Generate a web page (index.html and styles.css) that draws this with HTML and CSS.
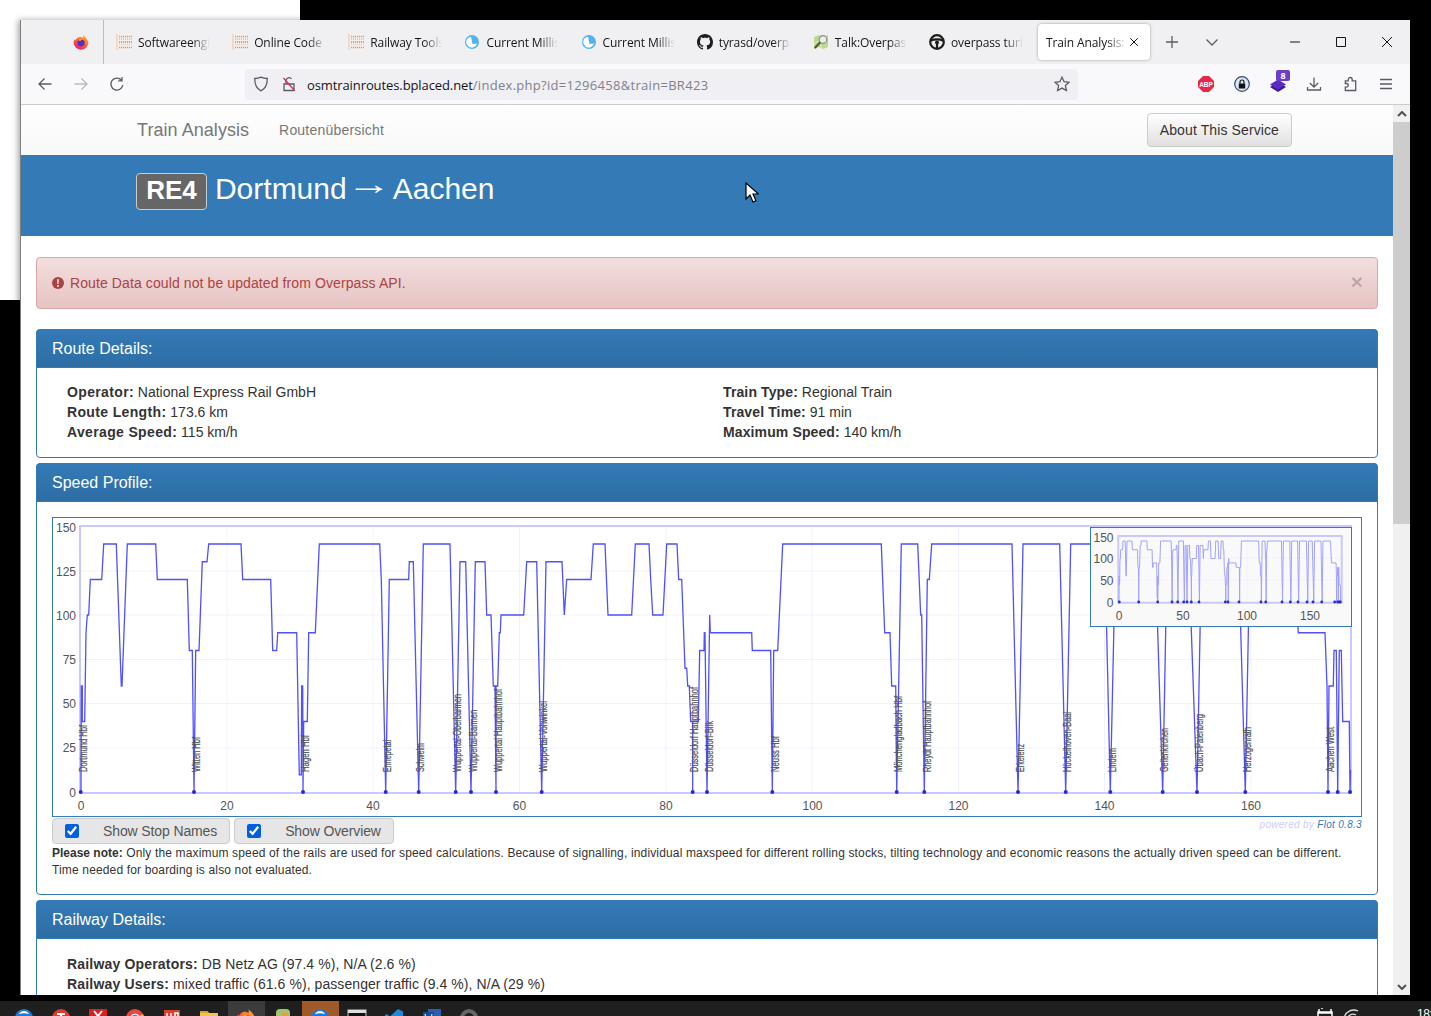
FILE: index.html
```html
<!DOCTYPE html>
<html lang="en">
<head>
<meta charset="utf-8">
<title>Train Analysis</title>
<link rel="stylesheet" href="styles.css">
</head>
<body>
<svg class="defs" aria-hidden="true">
  <defs>
    <linearGradient id="fxg" x1="0.8" y1="0" x2="0.2" y2="1"><stop offset="0" stop-color="#ffbd2e"/><stop offset=".45" stop-color="#ff6b2c"/><stop offset="1" stop-color="#e31587"/></linearGradient>
    <symbol id="i-fx" viewBox="0 0 16 16">
      <path d="M10 .6c.4 1.6 2 2 3.2 3.6 1.300 1.700 2.100 3.300 2.100 4.600a7.300 7.100 0 1 1-14.600-.3c0-1.400.5-2.700 1.200-3.500l.6 1.400C3.300 4 5.600 2.900 7 3c1.200 0 2.300.5 3 .9C10.300 3 10.300 1.700 10 .6z" fill="url(#fxg)"/>
      <circle cx="8" cy="8.800" r="3.600" fill="#5b2ac0"/>
      <path d="M5 6.500c1-1.700 4-2 5.500-.3-1.500-.5-2.500 0-2.800.8-.8 0-1.800-.2-2.700-.5z" fill="#ff9a2e"/>
    </symbol>
    <symbol id="i-angle" viewBox="0 0 16 16">
      <rect width="16" height="16" fill="#f8f0ec"/>
      <rect x="0" width="2" height="16" fill="#f3d7c9"/>
      <g fill="none" stroke-width="1.400" stroke-dasharray="1.200 .8">
        <path d="M3 2.500h13" stroke="#a9a4a0"/>
        <path d="M3 5h13" stroke="#c9c4c0"/>
        <path d="M3 8h13" stroke="#b28f7c"/>
        <path d="M3 10.500h13" stroke="#e3cfc4"/>
        <path d="M3 13.500h13" stroke="#c99a80"/>
      </g>
    </symbol>
    <symbol id="i-millis" viewBox="0 0 16 16">
      <circle cx="8" cy="8" r="7" fill="#55b3ea"/>
      <path d="M7 2.800A5.300 5.300 0 0 0 4.500 12.400 5.300 5.300 0 0 0 13 9.500L8.500 10z" fill="#fff"/>
    </symbol>
    <symbol id="i-gh" viewBox="0 0 16 16">
      <path fill="#1b1f23" d="M8 0C3.580 0 0 3.580 0 8c0 3.540 2.290 6.530 5.470 7.590.4.070.55-.17.55-.38 0-.19-.01-.82-.01-1.490-2.010.37-2.530-.49-2.690-.94-.09-.23-.48-.94-.82-1.130-.28-.15-.68-.52-.01-.53.630-.01 1.080.58 1.230.82.720 1.210 1.870.87 2.330.66.070-.52.280-.87.510-1.070-1.780-.2-3.640-.89-3.640-3.950 0-.87.310-1.590.820-2.150-.08-.2-.36-1.020.080-2.120 0 0 .67-.21 2.200.82.640-.18 1.320-.27 2-.27.680 0 1.360.09 2 .27 1.530-1.040 2.200-.82 2.200-.82.440 1.100.160 1.920.080 2.120.510.560.820 1.270.820 2.150 0 3.070-1.870 3.750-3.650 3.950.290.250.540.730.540 1.480 0 1.070-.01 1.930-.01 2.200 0 .21.150.46.550.38A8.013 8.013 0 0 0 16 8c0-4.420-3.580-8-8-8z"/>
    </symbol>
    <symbol id="i-talk" viewBox="0 0 16 16">
      <path d="M1 3l5-2 4 2 5-2v12l-5 2-4-2-5 2z" fill="#b9dc8f"/>
      <path d="M1 10l5-3 3 8" fill="none" stroke="#e8e3b8" stroke-width="1"/>
      <circle cx="10" cy="5.500" r="3.800" fill="#e6eef0" stroke="#8b8f78" stroke-width="1.200"/>
      <path d="M7.200 8.300L1.800 14" stroke="#4c5a3a" stroke-width="2.200"/>
    </symbol>
    <symbol id="i-turbo" viewBox="0 0 16 16">
      <circle cx="8" cy="8" r="6.800" fill="none" stroke="#1c1c1c" stroke-width="2.200"/>
      <path d="M1.500 6.800C5 5 11 5 14.500 6.800M8 10v5" fill="none" stroke="#1c1c1c" stroke-width="2.200"/>
      <circle cx="8" cy="8.500" r="2" fill="#1c1c1c"/>
    </symbol>
  </defs>
</svg>

<div class="backdrop"></div>

<main class="window">
  <header class="tabbar">
    <div class="fx-cell"><svg class="fav"><use href="#i-fx"/></svg></div>
    <div class="tab"><svg class="fav"><use href="#i-angle"/></svg><span class="tab-title">Softwareengineering</span></div>
    <div class="tab"><svg class="fav"><use href="#i-angle"/></svg><span class="tab-title">Online Code Editor</span></div>
    <div class="tab"><svg class="fav"><use href="#i-angle"/></svg><span class="tab-title">Railway Tools</span></div>
    <div class="tab"><svg class="fav"><use href="#i-millis"/></svg><span class="tab-title">Current Millis</span></div>
    <div class="tab"><svg class="fav"><use href="#i-millis"/></svg><span class="tab-title">Current Millis</span></div>
    <div class="tab"><svg class="fav"><use href="#i-gh"/></svg><span class="tab-title">tyrasd/overpass</span></div>
    <div class="tab"><svg class="fav"><use href="#i-talk"/></svg><span class="tab-title">Talk:Overpass turbo</span></div>
    <div class="tab"><svg class="fav"><use href="#i-turbo"/></svg><span class="tab-title">overpass turbo</span></div>
    <div class="tab tab-active"><span class="tab-title tab-title-active">Train Analysis: RE4</span>
      <svg class="tab-close" viewBox="0 0 12 12"><path d="M1.500 1.500l9 9m0-9l-9 9"/></svg></div>
    <div class="tabbtn"><svg class="ic16" viewBox="0 0 16 16"><path d="M8 2v12M2 8h12"/></svg></div>
    <div class="tabbtn"><svg class="ic16" viewBox="0 0 16 16"><path d="M2.500 5.500L8 11l5.500-5.500"/></svg></div>
    <div class="winbtns">
      <div class="winbtn"><svg class="win-ic" viewBox="0 0 12 12"><path d="M1 6h10"/></svg></div>
      <div class="winbtn"><svg class="win-ic" viewBox="0 0 12 12"><path d="M1.500 1.500h9v9h-9z"/></svg></div>
      <div class="winbtn"><svg class="win-ic" viewBox="0 0 12 12"><path d="M1 1l10 10m0-10L1 11"/></svg></div>
    </div>
  </header>

  <nav class="toolbar">
    <div class="tbtn"><svg class="ic16" viewBox="0 0 16 16"><path d="M14.500 8H2M7.500 2.500L2 8l5.500 5.500"/></svg></div>
    <div class="tbtn"><svg class="ic16 ic-dim" viewBox="0 0 16 16"><path d="M1.500 8H14M8.500 2.500L14 8l-5.500 5.500"/></svg></div>
    <div class="tbtn"><svg class="ic16" viewBox="0 0 16 16"><path d="M13.800 9a6 6 0 1 1-1.500-5M13 1v3.800H9.200"/></svg></div>
    <div class="urlbar">
      <svg class="ic16" viewBox="0 0 16 16"><path d="M8 1.200c2 1 4 1.300 6.300 1.300 0 5.500-1.500 10-6.300 12.300C3.200 12.500 1.700 8 1.700 2.500 4 2.500 6 2.200 8 1.200z"/></svg>
      <svg class="ic16" viewBox="0 0 16 16"><path d="M3 8h10v6.500H3zM5 8V4.500a3 3 0 0 1 5.500-1.500"/><path class="strike" d="M2.500 2l11 12.500"/></svg>
      <span class="url"><span class="url-host">osmtrainroutes.bplaced.net</span><span class="url-path">/index.php?id=1296458&amp;train=BR423</span></span>
      <svg class="ic16 star" viewBox="0 0 16 16"><path d="M8 1.200l2.100 4.500 4.900.6-3.600 3.300 1 4.900L8 12.100l-4.400 2.400 1-4.900L1 6.300l4.900-.6z"/></svg>
    </div>
    <div class="tb-spacer"></div>
    <div class="tbtn"><svg class="fav" viewBox="0 0 16 16"><path d="M5 0h6l5 5v6l-5 5H5l-5-5V5z" fill="#e8274a"/><text class="abp" x="8" y="10.500" text-anchor="middle">ABP</text></svg></div>
    <div class="tbtn"><svg class="fav" viewBox="0 0 16 16"><circle cx="8" cy="8" r="7.300" fill="#dbe6f5" stroke="#3b4a6b" stroke-width="1.200"/><path d="M4.800 7.500h6.400v5H4.800z" fill="#111"/><path d="M6 7.500V6a2 2 0 0 1 4 0v1.500" fill="none" stroke="#111" stroke-width="1.200"/></svg></div>
    <div class="tbtn tbtn-badge"><svg class="fav" viewBox="0 0 16 16"><path d="M0 11l8-5 8 5-8 5z" fill="#3f1a96"/><path d="M0 8.500l8-5 8 5-8 5z" fill="#5a2bc0"/></svg><span class="badge">8</span></div>
    <div class="tbtn"><svg class="ic16" viewBox="0 0 16 16"><path d="M8 1.500v9.500M3.800 7L8 11l4.200-4M1.500 11v3h13v-3"/></svg></div>
    <div class="tbtn"><svg class="ic16" viewBox="0 0 16 16"><path d="M6.200 4.800V3.500a2 2 0 1 1 4 0v1.300h3.500v9.700H3.300v-3.400H4.500a1.800 1.800 0 1 0 0-3.600H3.300V4.800z"/></svg></div>
    <div class="tbtn"><svg class="ic16" viewBox="0 0 16 16"><path d="M2 3.500h12M2 8h12M2 12.500h12"/></svg></div>
  </nav>

  <div class="viewport">
    <div class="page">
      <div class="navbar">
        <span class="brand">Train Analysis</span>
        <span class="navlink">Routenübersicht</span>
        <span class="about-btn">About This Service</span>
      </div>
      <div class="jumbo">
        <span class="route-label">RE4</span>
        <h1 class="route-title">Dortmund <span class="arrow">→</span> Aachen</h1>
      </div>
      <div class="content">
        <div class="alert">
          <svg class="alert-ic" viewBox="0 0 12 12"><circle cx="6" cy="6" r="6"/><path class="alert-mark" d="M5 2.200h2l-.3 4.800H5.300zM5 8h2v1.800H5z"/></svg>
          <span class="alert-text">Route Data could not be updated from Overpass API.</span>
          <span class="alert-close">×</span>
        </div>

        <section class="panel">
          <h2 class="panel-head">Route Details:</h2>
          <div class="panel-body details">
            <div class="col-left"><b>Operator:</b> National Express Rail GmbH<br><b>Route Length:</b> 173.6 km<br><b>Average Speed:</b> 115 km/h</div>
            <div class="col-right"><b>Train Type:</b> Regional Train<br><b>Travel Time:</b> 91 min<br><b>Maximum Speed:</b> 140 km/h</div>
          </div>
        </section>

        <section class="panel">
          <h2 class="panel-head">Speed Profile:</h2>
          <div class="panel-body chart-body">
            <div class="chart">
              <svg class="chart-svg" viewBox="53 518 1308 298" width="1308" height="298">
                <g class="grid">
                  <path d="M227 526V793M373 526V793M519.500 526V793M666 526V793M812 526V793M958.500 526V793M1104.500 526V793M1251 526V793"/>
                  <path d="M80 571H1351M80 615H1351M80 659.500H1351M80 703.500H1351M80 748H1351"/>
                </g>
                <rect class="frame" x="80" y="526" width="1271" height="267"/>
                <polyline id="speed" class="speed" points="81,792.5 81.3,686 82.3,686 82.3,721.5 84.7,721.5 86,632.75 87.3,615 88.7,615 90.3,579.5 101.7,579.5 103.7,544 116.3,544 121.3,686 122,686 127.3,544 155.7,544 157.3,579.5 187.3,579.5 189.3,650.5 192.3,650.5 194,792.5 195.7,650.5 199,650.5 202.3,561.75 207,561.75 208.7,544 241,544 242.7,579.5 270.7,579.5 272.7,650.5 276.7,650.5 277.7,632.75 296.7,632.75 299.3,774.75 301.3,774.75 301.7,686 302.7,686 303,792.5 303.7,721.5 307.3,721.5 308.7,632.75 315.3,632.75 319.3,544 379.7,544 381.3,579.5 385.7,792.5 389.3,579.5 408.7,579.5 409.3,561.75 413.3,561.75 418.7,792.5 423.3,544 450,544 455.7,792.5 460,561.75 465.7,561.75 471,792.5 475.3,561.75 485,561.75 486.7,615 491,615 493.3,686 495,686 496,792.5 496,686 497.7,686 499.3,632.75 500.3,632.75 501,615 523.7,615 526.7,561.75 536.7,561.75 541.7,792.5 546,561.75 562,561.75 564.3,615 566.7,579.5 591,579.5 593.3,544 605,544 608,615 631.7,615 635.3,544 649,544 650.7,579.5 652.7,615 663,615 666.7,544 677,544 678.7,579.5 681.7,579.5 685,668.25 686.7,668.25 687.7,686 689.3,686 690.7,721.5 692.7,721.5 692.7,792.5 692.7,721.5 698.3,721.5 699.7,650.5 704,650.5 704.3,632.75 705,632.75 707,792.5 709.7,615 710.3,632.75 751.7,632.75 752.3,650.5 770.7,650.5 772.3,792.5 773.7,650.5 777.7,650.5 782.7,544 881.3,544 884.7,632.75 890,632.75 891.7,686 895.7,686 896.7,792.5 901.3,544 917.7,544 920.7,615 921.7,615 924.3,792.5 927.3,579.5 929.3,579.5 931.7,544 1012,544 1018,792.5 1023,544 1059.7,544 1065.7,792.5 1070.7,544 1104.7,544 1110.3,792.5 1115.7,544 1155,544 1162.7,792.5 1167.3,544 1188.3,544 1197,792.5 1201.7,544 1238.3,544 1245.3,792.5 1250,544 1293.3,544 1298.3,632.75 1325,632.75 1327,686 1328,792.5 1329,686 1333.3,686 1334,650.5 1336.3,650.5 1337.7,792.5 1339.3,650.5 1341.3,650.5 1342.7,721.5 1349.3,721.5 1350,792.5 1350.5,770"/>
                <g class="dots">
                  <circle cx="80.700" cy="792" r="2"/><circle cx="194" cy="792" r="2"/><circle cx="303" cy="792" r="2"/><circle cx="385.700" cy="792" r="2"/><circle cx="418.700" cy="792" r="2"/><circle cx="455.700" cy="792" r="2"/><circle cx="471" cy="792" r="2"/><circle cx="496" cy="792" r="2"/><circle cx="541.700" cy="792" r="2"/><circle cx="692.700" cy="792" r="2"/><circle cx="707" cy="792" r="2"/><circle cx="772.300" cy="792" r="2"/><circle cx="896.700" cy="792" r="2"/><circle cx="924.300" cy="792" r="2"/><circle cx="1018" cy="792" r="2"/><circle cx="1065.700" cy="792" r="2"/><circle cx="1110.300" cy="792" r="2"/><circle cx="1162.700" cy="792" r="2"/><circle cx="1197" cy="792" r="2"/><circle cx="1245.300" cy="792" r="2"/><circle cx="1328" cy="792" r="2"/><circle cx="1337.700" cy="792" r="2"/><circle cx="1350" cy="792" r="2"/>
                </g>
                <g class="stops">
                  <text transform="translate(87,772) rotate(-90)" textLength="47" lengthAdjust="spacingAndGlyphs">Dortmund Hbf</text>
                  <text transform="translate(199.500,772) rotate(-90)" textLength="35" lengthAdjust="spacingAndGlyphs">Witten Hbf</text>
                  <text transform="translate(308.500,772) rotate(-90)" textLength="37" lengthAdjust="spacingAndGlyphs">Hagen Hbf</text>
                  <text transform="translate(390.500,772) rotate(-90)" textLength="32" lengthAdjust="spacingAndGlyphs">Ennepetal</text>
                  <text transform="translate(423.500,772) rotate(-90)" textLength="29" lengthAdjust="spacingAndGlyphs">Schwelm</text>
                  <text transform="translate(461,772) rotate(-90)" textLength="78" lengthAdjust="spacingAndGlyphs">Wuppertal-Oberbarmen</text>
                  <text transform="translate(477,772) rotate(-90)" textLength="62" lengthAdjust="spacingAndGlyphs">Wuppertal-Barmen</text>
                  <text transform="translate(501.500,772) rotate(-90)" textLength="83" lengthAdjust="spacingAndGlyphs">Wuppertal Hauptbahnhof</text>
                  <text transform="translate(546.500,772) rotate(-90)" textLength="71" lengthAdjust="spacingAndGlyphs">Wuppertal-Vohwinkel</text>
                  <text transform="translate(697.500,772) rotate(-90)" textLength="85" lengthAdjust="spacingAndGlyphs">Düsseldorf Hauptbahnhof</text>
                  <text transform="translate(712.500,772) rotate(-90)" textLength="51" lengthAdjust="spacingAndGlyphs">Düsseldorf-Bilk</text>
                  <text transform="translate(778.500,772) rotate(-90)" textLength="36" lengthAdjust="spacingAndGlyphs">Neuss Hbf</text>
                  <text transform="translate(902,772) rotate(-90)" textLength="76" lengthAdjust="spacingAndGlyphs">Mönchengladbach Hbf</text>
                  <text transform="translate(930.500,772) rotate(-90)" textLength="71" lengthAdjust="spacingAndGlyphs">Rheydt Hauptbahnhof</text>
                  <text transform="translate(1024,772) rotate(-90)" textLength="28" lengthAdjust="spacingAndGlyphs">Erkelenz</text>
                  <text transform="translate(1070.500,772) rotate(-90)" textLength="60" lengthAdjust="spacingAndGlyphs">Hückelhoven-Baal</text>
                  <text transform="translate(1116,772) rotate(-90)" textLength="24" lengthAdjust="spacingAndGlyphs">Lindern</text>
                  <text transform="translate(1167.500,772) rotate(-90)" textLength="44" lengthAdjust="spacingAndGlyphs">Geilenkirchen</text>
                  <text transform="translate(1202.500,772) rotate(-90)" textLength="58" lengthAdjust="spacingAndGlyphs">Übach-Palenberg</text>
                  <text transform="translate(1250.500,772) rotate(-90)" textLength="45" lengthAdjust="spacingAndGlyphs">Herzogenrath</text>
                  <text transform="translate(1333.500,772) rotate(-90)" textLength="45" lengthAdjust="spacingAndGlyphs">Aachen West</text>
                </g>
                <g class="ticks ticks-y">
                  <text x="76" y="531.500">150</text><text x="76" y="575.500">125</text><text x="76" y="619.500">100</text><text x="76" y="663.500">75</text><text x="76" y="707.500">50</text><text x="76" y="751.500">25</text><text x="76" y="796.500">0</text>
                </g>
                <g class="ticks ticks-x">
                  <text x="81" y="810">0</text><text x="227" y="810">20</text><text x="373" y="810">40</text><text x="519.500" y="810">60</text><text x="666" y="810">80</text><text x="812.500" y="810">100</text><text x="958.500" y="810">120</text><text x="1104.500" y="810">140</text><text x="1251" y="810">160</text>
                </g>
              </svg>
              <div class="overview">
                <svg class="overview-svg" viewBox="1091 528 260 98" width="260" height="98">
                  <g class="grid">
                    <path d="M1183 536V603M1247 536V603M1310 536V603M1118 558H1342M1118 580H1342"/>
                  </g>
                  <rect class="frame" x="1118.300" y="536" width="223.400" height="66.700"/>
                  <use class="mini-line" href="#speed" transform="translate(1104.870 406.400) scale(.1745 .2474)"/>
                  <g class="mini-dots">
                    <circle cx="1119.300" cy="602" r="1.400"/><circle cx="1138.700" cy="602" r="1.400"/><circle cx="1157.700" cy="602" r="1.400"/><circle cx="1172" cy="602" r="1.400"/><circle cx="1177.700" cy="602" r="1.400"/><circle cx="1183.700" cy="602" r="1.400"/><circle cx="1187" cy="602" r="1.400"/><circle cx="1191.300" cy="602" r="1.400"/><circle cx="1199" cy="602" r="1.400"/><circle cx="1225.300" cy="602" r="1.400"/><circle cx="1228" cy="602" r="1.400"/><circle cx="1239" cy="602" r="1.400"/><circle cx="1261" cy="602" r="1.400"/><circle cx="1265.700" cy="602" r="1.400"/><circle cx="1282" cy="602" r="1.400"/><circle cx="1290.300" cy="602" r="1.400"/><circle cx="1298" cy="602" r="1.400"/><circle cx="1307" cy="602" r="1.400"/><circle cx="1313" cy="602" r="1.400"/><circle cx="1321.700" cy="602" r="1.400"/><circle cx="1334.700" cy="602" r="1.400"/><circle cx="1337.700" cy="602" r="1.400"/><circle cx="1339.300" cy="602" r="1.400"/><circle cx="1340.300" cy="602" r="1.400"/>
                  </g>
                  <g class="ticks ticks-y">
                    <text x="1113.500" y="542">150</text><text x="1113.500" y="563">100</text><text x="1113.500" y="585">50</text><text x="1113.500" y="607">0</text>
                  </g>
                  <g class="ticks ticks-x">
                    <text x="1119" y="620">0</text><text x="1183" y="620">50</text><text x="1247" y="620">100</text><text x="1310" y="620">150</text>
                  </g>
                </svg>
              </div>
            </div>
            <div class="chart-controls">
              <label class="toggle"><input class="check" type="checkbox" checked><span>Show Stop Names</span></label>
              <label class="toggle"><input class="check" type="checkbox" checked><span>Show Overview</span></label>
              <span class="flot-credit">powered by <span class="flot-name">Flot 0.8.3</span></span>
            </div>
            <p class="note"><b>Please note:</b> Only the maximum speed of the rails are used for speed calculations. Because of signalling, individual maxspeed for different rolling stocks, tilting technology and economic reasons the actually driven speed can be different. Time needed for boarding is also not evaluated.</p>
          </div>
        </section>

        <section class="panel">
          <h2 class="panel-head">Railway Details:</h2>
          <div class="panel-body railway">
            <div><b>Railway Operators:</b> DB Netz AG (97.4 %), N/A (2.6 %)<br><b>Railway Users:</b> mixed traffic (61.6 %), passenger traffic (9.4 %), N/A (29 %)</div>
          </div>
        </section>
      </div>
    </div>
    <aside class="scrollbar">
      <div class="sb-btn"><svg class="sb-ic" viewBox="0 0 10 6"><path d="M1 5l4-4 4 4"/></svg></div>
      <div class="sb-track"><div class="sb-thumb"></div></div>
      <div class="sb-btn"><svg class="sb-ic" viewBox="0 0 10 6"><path d="M1 1l4 4 4-4"/></svg></div>
    </aside>
  </div>
</main>

<svg class="cursor" viewBox="0 0 14 22"><path d="M1 1v16l4-4 3 7 3-1.300-3-6.700h5.500z" fill="#fff" stroke="#000" stroke-width="1.200"/></svg>

<footer class="taskbar">
  <div class="task"><svg class="task-ic" viewBox="0 0 20 20"><circle cx="10" cy="10" r="9" fill="#1f78d1"/><path d="M5 6c2-4 8-4 10 0-3-1-7-1-10 0z" fill="#fff"/></svg></div>
  <div class="task"><svg class="task-ic" viewBox="0 0 20 20"><circle cx="10" cy="10" r="9" fill="#e03a2f"/><path d="M6 6h8M10 6v8" stroke="#fff" stroke-width="2"/></svg></div>
  <div class="task"><svg class="task-ic" viewBox="0 0 20 20"><rect x="1" y="1" width="18" height="18" fill="#d81e1e"/><path d="M6 3l8 10M14 3L6 13" stroke="#fff" stroke-width="2"/></svg></div>
  <div class="task"><svg class="task-ic" viewBox="0 0 20 20"><circle cx="10" cy="10" r="9" fill="#e8453c"/><path d="M10 10L2 14a9 9 0 0 0 9 5z" fill="#3aa757"/><path d="M10 10l8-4a9 9 0 0 1-7 13z" fill="#fbc02d"/><circle cx="10" cy="10" r="4" fill="#4285f4" stroke="#fff"/></svg></div>
  <div class="task"><svg class="task-ic" viewBox="0 0 20 20"><rect x="2" y="2" width="16" height="17" fill="#d5432b"/><path d="M5 5v6M9 5v6M13 5h3v6h-3z" stroke="#fff" fill="none" stroke-width="1.500"/></svg></div>
  <div class="task"><svg class="task-ic" viewBox="0 0 20 20"><path d="M1 3h7l2 2h9v14H1z" fill="#f4c542"/><path d="M1 3h7l2 2H1z" fill="#d9a520"/></svg></div>
  <div class="task task-active"><svg class="task-ic" viewBox="0 0 16 16"><use href="#i-fx"/></svg></div>
  <div class="task"><svg class="task-ic" viewBox="0 0 20 20"><rect x="3" y="1" width="14" height="18" rx="4" fill="#a4c46c"/><circle cx="12" cy="8" r="3.500" fill="#e4a03c"/></svg></div>
  <div class="task task-orange"><svg class="task-ic" viewBox="0 0 20 20"><circle cx="10" cy="10" r="9" fill="#1f78d1"/><path d="M5 6c2-4 8-4 10 0-3-1-7-1-10 0z" fill="#fff"/></svg></div>
  <div class="task"><svg class="task-ic" viewBox="0 0 20 20"><rect x="1" y="2" width="18" height="16" fill="#111" stroke="#ccc"/><rect x="1" y="2" width="18" height="3" fill="#ddd"/><path d="M5 9h1M11 9h1" stroke="#fff"/></svg></div>
  <div class="task"><svg class="task-ic" viewBox="0 0 20 20"><path d="M14 1l5 2.500v13L14 19 6 11.500 2.500 14 1 13V7l1.500-1L6 8.500z" fill="#1f8ad2"/></svg></div>
  <div class="task"><svg class="task-ic" viewBox="0 0 20 20"><rect x="6" y="1" width="13" height="18" fill="#2a5fb0"/><rect x="1" y="4" width="11" height="12" fill="#174a96"/><path d="M3 6l1.500 7L6.500 8l2 5L10 6" stroke="#fff" fill="none"/></svg></div>
  <div class="task"><svg class="task-ic" viewBox="0 0 20 20"><circle cx="10" cy="10" r="7" fill="none" stroke="#666" stroke-width="4"/></svg></div>
  <div class="tray">
    <svg class="tray-ic" viewBox="0 0 16 12"><path d="M2 1v4h12V1M5 1V0M1 4h14v8H1z" fill="none" stroke="#fff" stroke-width="1.500"/></svg>
    <svg class="tray-ic" viewBox="0 0 16 12"><path d="M1 10a10 10 0 0 1 14-7M4 12a6 6 0 0 1 9-5" fill="none" stroke="#ddd" stroke-width="1.300"/></svg>
    <span class="clock">18:</span>
  </div>
</footer>
</body>
</html>
```
FILE: styles.css
```css
* { box-sizing: border-box; }
html, body { margin: 0; height: 100%; }
body {
  position: relative;
  width: 1431px;
  height: 1016px;
  overflow: hidden;
  background: #000;
  font-family: "Liberation Sans", Arial, sans-serif;
  font-size: 14px;
  line-height: 20px;
  color: #333;
}
.defs { position: absolute; width: 0; height: 0; }
.backdrop { position: absolute; left: 0; top: 0; width: 300px; height: 300px; background: #fff; }

/* window */
.window {
  position: absolute;
  left: 20px;
  top: 20px;
  width: 1390px;
  height: 975px;
  display: flex;
  flex-direction: column;
  background: #fff;
  border-left: 1px solid #808080;
  box-shadow: -2px 0 6px rgba(0, 0, 0, .35);
  overflow: hidden;
}
.fav { width: 16px; height: 16px; flex: none; display: block; }
.ic16 { width: 16px; height: 16px; flex: none; display: block; fill: none; stroke: #5b5b66; stroke-width: 1.3; }
.ic-dim { stroke: #b9b9c0; }

.tabbar { height: 44px; flex: none; display: flex; align-items: center; background: #f0f0f2; font-family: "Open Sans", sans-serif; font-size: 12px; color: #15141a; }
.fx-cell { width: 83px; height: 44px; flex: none; display: flex; align-items: center; justify-content: flex-end; padding-right: 14px; border-right: 1px solid #bdbdbd; }
.tab { width: 116.15px; flex: none; display: flex; align-items: center; gap: 6px; padding-left: 12px; }
.tab-title {
  width: 72px;
  margin-top: 2px;
  white-space: nowrap;
  overflow: hidden;
  letter-spacing: -.1px;
  line-height: 16px;
  -webkit-mask-image: linear-gradient(90deg, #000 75%, transparent 100%);
  mask-image: linear-gradient(90deg, #000 75%, transparent 100%);
}
.tab-active { width: 112px; height: 36px; margin-left: 4.8px; padding-left: 8px; gap: 0; background: #fff; border-radius: 4px; box-shadow: 0 0 3px rgba(0, 0, 0, .35); }
.tab-title-active { width: 81px; }
.tab-close { width: 10px; height: 10px; margin-left: 2px; fill: none; stroke: #15141a; stroke-width: 1.2; }
.tabbtn { width: 40px; flex: none; display: flex; justify-content: center; }
.tab-active + .tabbtn { margin-left: 2px; }
.winbtns { margin-left: auto; display: flex; }
.winbtn { width: 46px; height: 44px; display: flex; align-items: center; justify-content: center; }
.win-ic { width: 12px; height: 12px; fill: none; stroke: #15141a; stroke-width: 1; }

.toolbar { height: 41px; flex: none; display: flex; align-items: center; padding: 0 6px; background: #f9f9fb; border-bottom: 1px solid #ccc; }
.tbtn { position: relative; width: 36px; flex: none; display: flex; justify-content: center; }
.urlbar { width: 833px; height: 31px; margin-left: 110px; flex: none; display: flex; align-items: center; gap: 12px; padding: 0 8px; background: #f0f0f4; border-radius: 4px; }
.strike { stroke: #e22850; }
.url { flex: 1; margin: 1px 0 0 -2px; white-space: nowrap; font-family: "Open Sans", sans-serif; font-size: 13px; letter-spacing: -.1px; }
.url-host { color: #15141a; }
.url-path { color: #80808a; letter-spacing: .3px; }
.tb-spacer { flex: 1; }
.abp { fill: #fff; font-family: "Liberation Sans", sans-serif; font-size: 6.5px; font-weight: 700; }
.badge { position: absolute; left: 16px; top: -6px; width: 14px; height: 11px; background: #6b3fc8; color: #fff; border-radius: 2px; font: 700 9px/11px "Open Sans", sans-serif; text-align: center; }

/* page */
.viewport { flex: 1; min-height: 0; display: flex; }
.page { flex: 1; min-width: 0; overflow: hidden; }
.navbar { height: 50px; display: flex; align-items: center; padding: 0 101px 0 116px; background: linear-gradient(#fff, #f8f8f8); color: #777; }
.brand { font-size: 18px; margin-right: 30px; letter-spacing: .05px; }
.navlink { letter-spacing: .2px; }
.about-btn { margin-left: auto; height: 34px; padding: 6px 12px; border: 1px solid #ccc; border-radius: 4px; background: linear-gradient(#fff, #e0e0e0); color: #333; letter-spacing: .11px; }
.jumbo { height: 81px; display: flex; align-items: flex-start; gap: 8px; padding: 18px 0 0 115px; background: #337ab7; color: #fff; }
.route-label { height: 37px; padding: 0 9.2px; border: 1px solid #ccc; border-radius: 4px; background: #666; font-size: 26px; line-height: 33px; font-weight: 700; }
.route-title { margin: -1px 0 0; font-size: 30px; line-height: 33px; font-weight: 400; }
.arrow { display: inline-block; margin-right: 1px; transform: translate(-1px, -5px) scaleX(1.5); }
.content { padding: 21px 15px 0; }
.alert { height: 52px; margin-bottom: 20px; display: flex; align-items: center; padding: 0 15px; border: 1px solid #dca7a7; border-radius: 4px; background: linear-gradient(#f2dede, #e7c3c3); color: #a94442; }
.alert-ic { width: 12px; height: 12px; margin-right: 6px; flex: none; fill: #a94442; }
.alert-mark { fill: #f0d8d8; }
.alert-text { letter-spacing: .1px; }
.alert-close { margin: -2px -1px 0 auto; font-size: 21px; font-weight: 700; color: #000; opacity: .2; }
.panel { margin-bottom: 5px; border: 1px solid #337ab7; border-radius: 4px; }
.panel-head { margin: -1px -1px 0; height: 38.6px; padding: 0 15px; border: 1px solid #337ab7; border-radius: 4px 4px 0 0; background: linear-gradient(#337ab7, #2e6da4); color: #fff; font-size: 16px; line-height: 38px; font-weight: 400; }
.panel-body { padding: 15px; }
.details { display: grid; grid-template-columns: 656px 1fr; padding: 14.4px 15px 15px 30px; }
.col-left b { letter-spacing: .35px; }
.col-right b { letter-spacing: .12px; }
.railway { padding-left: 30px; letter-spacing: .07px; }
.railway b { letter-spacing: .18px; }
.chart-body { padding-bottom: 15.4px; }
.chart { position: relative; height: 300px; border: 1px solid #337ab7; }
.chart-svg { display: block; }
.overview { position: absolute; left: 1037px; top: 9px; width: 262px; height: 100px; border: 1px solid #337ab7; background: #f9f9f9; }
.overview-svg { display: block; }
.grid path { fill: none; stroke: #f1f1fd; stroke-width: 1; }
.frame { fill: none; stroke: #c9c9ff; stroke-width: 2; }
.speed { fill: none; stroke: var(--line, #5050ff); stroke-width: var(--line-w, 1.3); stroke-linejoin: miter; vector-effect: non-scaling-stroke; }
.mini-line { --line: #a2a2ff; --line-w: 1; }
.dots circle, .mini-dots circle { fill: #2a2ad0; }
.stops text { font-size: 10px; fill: #555; stroke: #555; stroke-width: .25; }
.ticks text { font-size: 12px; fill: #545454; }
.ticks-y text { text-anchor: end; }
.ticks-x text { text-anchor: middle; }
.chart-controls { display: flex; align-items: flex-start; gap: 4px; margin-top: 1px; }
.toggle { height: 26px; display: flex; align-items: center; padding: 0 12px; border: 1px solid #ccc; border-radius: 4px; background: #e6e6e6; color: #555; font-size: 14px; letter-spacing: -.12px; }
.check { width: 14px; height: 14px; margin: 0 24px 0 0; accent-color: #0060df; }
.flot-credit { margin: 1px 0 0 auto; font-size: 10px; line-height: 12px; font-style: italic; letter-spacing: .3px; color: #ccccff; }
.flot-name { color: #337ab7; }
.note { margin: 1px 0 0; font-size: 12px; line-height: 17px; letter-spacing: .15px; }
.note b { letter-spacing: 0; }

/* scrollbar */
.scrollbar { width: 17px; flex: none; display: flex; flex-direction: column; background: #f0f0f0; }
.sb-btn { height: 17px; flex: none; display: flex; align-items: center; justify-content: center; }
.sb-ic { width: 10px; height: 6px; fill: none; stroke: #505050; stroke-width: 2; }
.sb-track { flex: 1; }
.sb-thumb { height: 402px; background: #cdcdcd; }

.cursor { position: absolute; left: 745px; top: 182px; width: 14px; height: 22px; }

/* taskbar */
.taskbar { position: absolute; left: 0; bottom: 0; width: 100%; height: 15px; display: flex; padding-left: 5px; background: #1f1f1f; overflow: hidden; }
.task { width: 37.1px; height: 15px; flex: none; display: flex; justify-content: center; padding-top: 7px; overflow: hidden; }
.task-ic { width: 20px; height: 20px; flex: none; }
.task-active { background: #3c3c3c; }
.task-orange { background: #a05a2a; }
.tray { margin-left: auto; display: flex; }
.tray-ic { width: 16px; height: 12px; margin: 7px 10px 0 0; }
.clock { width: 14px; margin-left: 48px; overflow: hidden; white-space: nowrap; color: #fff; font-size: 12px; letter-spacing: -.5px; line-height: 15px; padding-top: 6px; }
```
